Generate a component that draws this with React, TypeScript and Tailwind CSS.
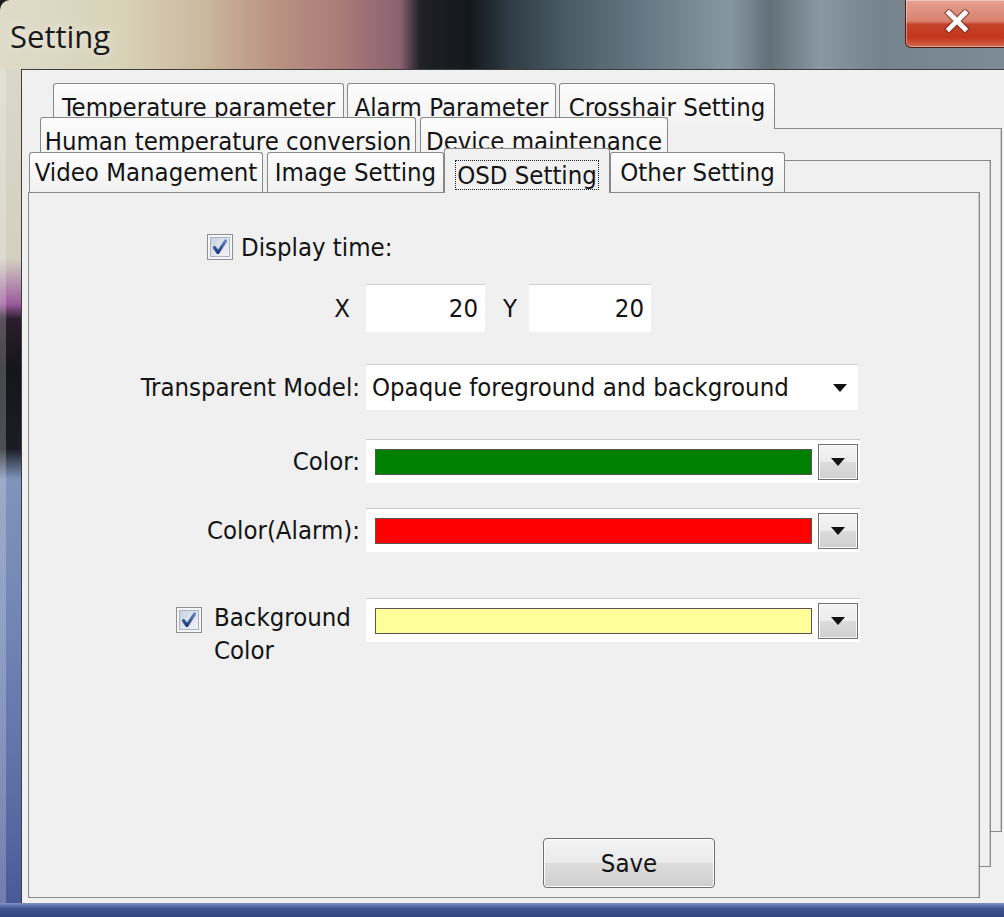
import React from "react";

type TabItem = { label: string; w: string };

const backRow: TabItem[] = [
  { label: "Temperature parameter", w: "w-[291px]" },
  { label: "Alarm Parameter", w: "w-[209px]" },
  { label: "Crosshair Setting", w: "w-[216px]" },
];

const midRow: TabItem[] = [
  { label: "Human temperature conversion", w: "w-[376px]" },
  { label: "Device maintenance", w: "w-[248px]" },
];

const tabBase =
  "shrink-0 overflow-hidden whitespace-nowrap rounded-t-[3px] border border-b-0 border-[#888] bg-[linear-gradient(to_bottom,#fdfdfd,#f1f1f1)] text-center leading-[28px]";

function Tab({ label, w, extra }: { label: string; w: string; extra: string }) {
  return <div className={`${tabBase} ${w} ${extra}`}>{label}</div>;
}

function CheckBox() {
  return (
    <svg width="26" height="26" viewBox="0 0 26 26" className="shrink-0">
      <defs>
        <linearGradient id="cb-fill" x1="0" y1="0" x2="1" y2="1">
          <stop offset="0" stopColor="#c9d2e2" />
          <stop offset="1" stopColor="#f3f5f9" />
        </linearGradient>
        <linearGradient id="cb-mark" x1="0" y1="0" x2="0" y2="1">
          <stop offset="0" stopColor="#6683bd" />
          <stop offset="1" stopColor="#1e3a78" />
        </linearGradient>
      </defs>
      <rect x="0.5" y="0.5" width="25" height="25" fill="#f6f6f6" stroke="#8e8f8f" />
      <rect x="3.5" y="3.5" width="19" height="19" fill="url(#cb-fill)" stroke="#aab3c3" />
      <path
        d="M7.5 13.5 L11 18.5 L18.5 7"
        fill="none"
        stroke="url(#cb-mark)"
        strokeWidth="3.2"
        strokeLinecap="round"
        strokeLinejoin="round"
      />
    </svg>
  );
}

function Arrow() {
  return (
    <svg width="14" height="8" viewBox="0 0 14 8">
      <path d="M0 0 H14 L7 8 Z" fill="#111" />
    </svg>
  );
}

function ColorCombo({ swatch }: { swatch: string }) {
  return (
    <div className="flex h-[44px] w-[494px] items-center border-t border-[#cacaca] bg-white pl-[9px] pr-[2px]">
      <div className={`h-[26px] w-[437px] border border-[#555] ${swatch}`} />
      <div className="ml-auto flex h-[36px] w-[40px] items-center justify-center border border-[#707070] bg-[linear-gradient(to_bottom,#f4f4f4_0%,#ececec_50%,#dcdcdc_50%,#cfcfcf_100%)] shadow-[inset_0_0_0_1px_#fbfbfb]">
        <Arrow />
      </div>
    </div>
  );
}

export default function App() {
  return (
    <div className="h-[917px] w-[1004px] overflow-hidden bg-[#1c1c1c] font-['DejaVu_Sans',sans-serif] text-[25.5px] text-[#141414] [font-stretch:condensed]">
      <div className="flex h-full flex-col overflow-hidden rounded-tl-[10px]">
        {/* title bar */}
        <div className="flex h-[69px] shrink-0 items-start justify-between bg-[linear-gradient(to_right,#dedbc9_0px,#d8d3b8_120px,#ccb9a0_200px,#bb9584_270px,#a97c78_340px,#8b6270_400px,#1f2226_420px,#14181c_470px,#2e3c45_510px,#4c5d67_570px,#687a85_650px,#8797a1_730px,#62707a_770px,#8a98a3_820px,#75838e_880px,#7d8b96_1004px)]">
          <span className="pl-[10px] pt-[21px] font-['Open_Sans',sans-serif] text-[31px] leading-none text-[#1a1a1a] [font-stretch:normal] [text-shadow:0_0_10px_rgba(255,255,255,0.8)]">
            Setting
          </span>
          <div className="-mr-[5px] flex h-[48px] w-[104px] shrink-0 justify-center rounded-bl-[6px] border border-t-0 border-[#4b1d16] bg-[linear-gradient(to_bottom,#e6a192_0%,#d9826f_45%,#c6432b_52%,#c3361d_80%,#d46a52_100%)] pt-[9px] shadow-[inset_0_0_0_1px_rgba(255,255,255,0.4)]">
            <svg width="26" height="24" viewBox="0 0 26 24">
              <path d="M5 4 L21 20 M21 4 L5 20" stroke="#5a2a22" strokeWidth="7.5" strokeLinecap="square" opacity="0.5" />
              <path d="M5 4 L21 20 M21 4 L5 20" stroke="#fdfdfd" strokeWidth="4.6" strokeLinecap="square" />
            </svg>
          </div>
        </div>

        <div className="flex min-h-0 flex-1">
          {/* left frame */}
          <div className="w-[21px] shrink-0 bg-[linear-gradient(to_right,rgba(255,255,255,0.22)_0_6px,transparent_6px),linear-gradient(to_bottom,#d9d7c8_0px,#d3d0c0_190px,#b58fae_215px,#9c5a9e_235px,#2a1e2c_250px,#15161a_300px,#1b1d24_380px,#7f93bb_410px,#7185b4_560px,#5d6ea6_720px,#4a5a97_834px)]" />

          {/* client area */}
          <div className="flex-1 border-l border-t border-[#3e3e3e] bg-[#f0f0f0] pl-[6px] pt-[13px]">
            <div className="grid w-[974px]">
              {/* back row page */}
              <div className="isolate col-start-1 row-start-1 flex flex-col">
                <div className="relative z-10 -mb-px flex gap-[3px] pl-[25px]">
                  {backRow.map((t) => (
                    <Tab key={t.label} label={t.label} w={t.w} extra="h-[46px] pt-[9px]" />
                  ))}
                </div>
                <div className="ml-[72px] h-[704px] w-[902px] border border-l-0 border-[#8a8a8a] bg-[#f0f0f0] shadow-[inset_-1px_0_0_#c8c8c8]" />
              </div>

              {/* middle row page */}
              <div className="isolate col-start-1 row-start-1 mt-[34px] flex flex-col">
                <div className="relative z-10 -mb-px flex gap-[4px] pl-[12px]">
                  {midRow.map((t) => (
                    <Tab key={t.label} label={t.label} w={t.w} extra="h-[44px] pt-[9px]" />
                  ))}
                </div>
                <div className="ml-[20px] h-[707px] w-[943px] border border-l-0 border-[#8a8a8a] bg-[#f0f0f0] shadow-[inset_-1px_0_0_#c8c8c8]" />
              </div>

              {/* front row page */}
              <div className="isolate col-start-1 row-start-1 mt-[65px] flex flex-col">
                <div className="relative z-10 flex h-[44px] items-end pl-[1px]">
                  <Tab label="Video Management" w="w-[234px]" extra="h-[40px] pt-[5px]" />
                  <Tab label="Image Setting" w="ml-[4px] w-[177px]" extra="h-[40px] pt-[5px]" />
                  <div className="-mb-px h-[45px] w-[166px] shrink-0 rounded-t-[3px] border border-b-0 border-[#888] bg-[#f0f0f0] pt-[7px] text-center">
                    <span className="inline-block border border-dotted border-[#222] px-[1px] leading-[28px]">OSD Setting</span>
                  </div>
                  <Tab label="Other Setting" w="w-[175px]" extra="h-[40px] pt-[5px]" />
                </div>

                <div className="flex h-[706px] w-[952px] flex-col border border-[#8a8a8a] bg-[#f0f0f0] pb-[9px] shadow-[inset_-1px_0_0_#c8c8c8]">
                  <div className="mt-[41px] flex h-[26px] items-center pl-[178px]">
                    <CheckBox />
                    <span className="ml-[8px]">Display time:</span>
                  </div>

                  <div className="mt-[24px] flex h-[48px] items-center">
                    <span className="w-[337px] pr-[16px] text-right">X</span>
                    <div className="flex h-[48px] w-[119px] items-center justify-end border-t border-[#d0d0d0] bg-white pr-[7px]">20</div>
                    <span className="ml-[18px]">Y</span>
                    <div className="ml-[12px] flex h-[48px] w-[122px] items-center justify-end border-t border-[#d0d0d0] bg-white pr-[7px]">20</div>
                  </div>

                  <div className="mt-[32px] flex items-center">
                    <span className="w-[337px] pr-[6px] text-right">Transparent Model:</span>
                    <div className="flex h-[46px] w-[492px] items-center border-t border-[#d0d0d0] bg-white pl-[6px] pr-[11px]">
                      <span>Opaque foreground and background</span>
                      <span className="ml-auto flex">
                        <Arrow />
                      </span>
                    </div>
                  </div>

                  <div className="mt-[29px] flex items-center">
                    <span className="w-[337px] pr-[6px] text-right">Color:</span>
                    <ColorCombo swatch="bg-[#007f00]" />
                  </div>

                  <div className="mt-[25px] flex items-center">
                    <span className="w-[337px] pr-[6px] text-right">Color(Alarm):</span>
                    <ColorCombo swatch="bg-[#ff0000]" />
                  </div>

                  <div className="mt-[46px] flex items-start">
                    <div className="flex w-[337px] items-start pl-[147px]">
                      <div className="mt-[9px]">
                        <CheckBox />
                      </div>
                      <span className="ml-[12px] mt-[3px] leading-[33px]">
                        Background
                        <br />
                        Color
                      </span>
                    </div>
                    <ColorCombo swatch="bg-[#ffff99]" />
                  </div>

                  <button
                    type="button"
                    className="ml-[514px] mt-auto h-[50px] w-[172px] rounded-[4px] border border-[#707070] bg-[linear-gradient(to_bottom,#f3f3f3_0%,#ebebeb_50%,#dddddd_50%,#cfcfcf_100%)] shadow-[inset_0_0_0_1px_#fcfcfc]"
                  >
                    Save
                  </button>
                </div>
              </div>
            </div>
          </div>
        </div>

        {/* bottom frame */}
        <div className="h-[14px] shrink-0 bg-[linear-gradient(to_bottom,#8093c6_0%,#3f528f_40%,#34467f_100%)]" />
      </div>
    </div>
  );
}
